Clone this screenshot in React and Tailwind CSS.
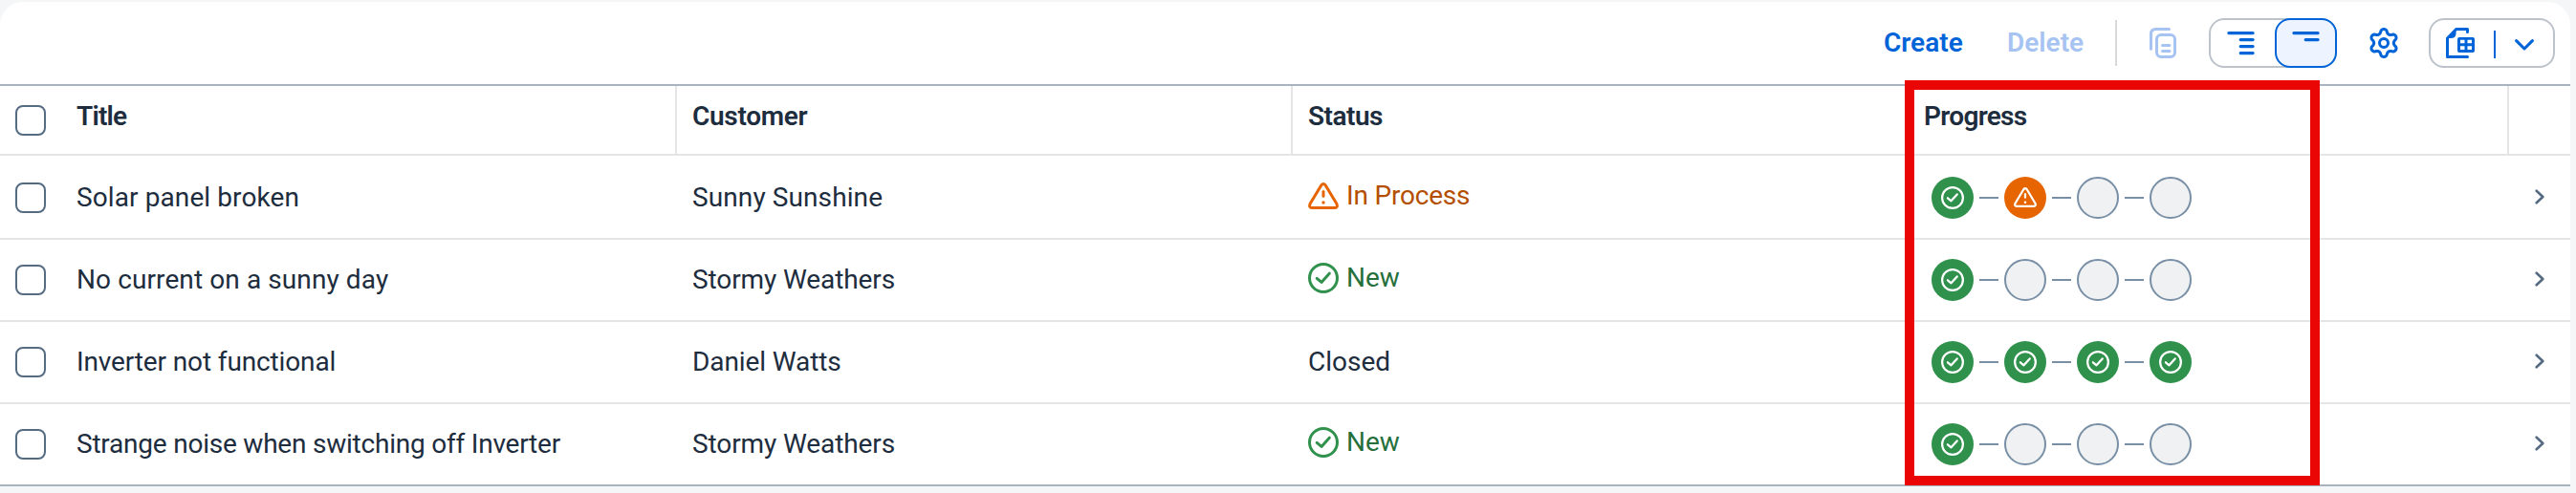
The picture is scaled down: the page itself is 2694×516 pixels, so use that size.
import React from "react";

const rows = [
  { title: "Solar panel broken", titleCls: "tracking-[0.1px]", customer: "Sunny Sunshine", customerCls: "tracking-[0.1px]", status: "In Process", kind: "warn", steps: ["ok", "warn", "", ""] },
  { title: "No current on a sunny day", titleCls: "tracking-[0.1px]", customer: "Stormy Weathers", customerCls: "tracking-[-0.1px]", status: "New", kind: "ok", steps: ["ok", "", "", ""] },
  { title: "Inverter not functional", titleCls: "tracking-[-0.13px]", customer: "Daniel Watts", customerCls: "tracking-[-0.1px]", status: "Closed", kind: "", steps: ["ok", "ok", "ok", "ok"] },
  { title: "Strange noise when switching off Inverter", titleCls: "tracking-[-0.22px]", customer: "Stormy Weathers", customerCls: "tracking-[-0.1px]", status: "New", kind: "ok", steps: ["ok", "", "", ""] },
];

const GRID = "grid grid-cols-[64px_644px_644px_644px_628px_64px]";

const gearPath = (() => {
  const points = [];
  for (let a = 0; a < 360; a += 3) {
    const t = (a * Math.PI) / 180;
    const c = -Math.cos(6 * t);
    const r = 12.4 + 2.1 * Math.sign(c) * Math.pow(Math.abs(c), 0.65);
    points.push(`${(15 + r * Math.cos(t)).toFixed(2)} ${(16 + r * Math.sin(t)).toFixed(2)}`);
  }
  return `M${points.join("L")}Z`;
})();

function CheckCircle({ className }) {
  return (
    <svg viewBox="0 0 32 32" className={className} fill="none" stroke="currentColor" strokeWidth="3" strokeLinecap="round" strokeLinejoin="round">
      <circle cx="16" cy="16" r="14.5" />
      <path d="M9.2 16.4 14 20.4 22.3 11.2" />
    </svg>
  );
}

function Alert({ className }) {
  return (
    <svg viewBox="0 0 32 28" className={className} fill="none" stroke="currentColor" strokeWidth="3" strokeLinecap="round" strokeLinejoin="round">
      <path d="M13.9 2.7Q16 .3 18.1 2.7L29.9 22.3Q31.4 26.3 28 26.5H4Q.6 26.3 2.1 22.3Z" />
      <path d="M16 9.5v4.8" />
      <circle cx="16" cy="21" r="1.7" fill="currentColor" stroke="none" />
    </svg>
  );
}

function Checkbox() {
  return <span className="ml-4 block size-8 rounded-lg border-2 border-[#556b82] bg-white" />;
}

function Step({ kind }) {
  if (kind === "ok")
    return (
      <span className="flex size-11 items-center justify-center rounded-full bg-[#30914c] pb-[1px] text-white">
        <CheckCircle className="size-6" />
      </span>
    );
  if (kind === "warn")
    return (
      <span className="flex size-11 items-center justify-center rounded-full bg-[#e76500] pb-[1px] text-white">
        <Alert className="h-[21px] w-6" />
      </span>
    );
  return <span className="block size-11 rounded-full border-2 border-[#788fa6] bg-[#eff1f2]" />;
}

function Status({ kind, children }) {
  if (kind === "warn")
    return (
      <span className="mb-1 flex items-center gap-2 tracking-[-0.2px] text-[#b44f00]">
        <Alert className="h-7 w-8 text-[#e76500]" />
        {children}
      </span>
    );
  if (kind === "ok")
    return (
      <span className="mb-1 flex items-center gap-2 text-[#256f3a]">
        <CheckCircle className="size-8 text-[#30914c]" />
        {children}
      </span>
    );
  return <span>{children}</span>;
}

function Toolbar() {
  return (
    <div className="flex h-[88px] items-center border-b-2 border-[#a8b3bf] pl-[1970px] font-semibold text-[#0064d9]">
      <span className="w-[129px] shrink-0">Create</span>
      <span className="w-[113px] shrink-0 text-[#a6c3f2]">Delete</span>
      <span className="h-12 w-0.5 shrink-0 bg-[#d9d9d9]" />
      <svg viewBox="0 0 28 32" className="ml-[34px] h-8 w-7 shrink-0 text-[#a6c3f2]" fill="none" stroke="currentColor" strokeWidth="3" strokeLinecap="round">
        <path d="M1.5 22.2V6.5Q1.5 1.5 6.5 1.5H20.5" />
        <rect x="7.5" y="7.5" width="19" height="23" rx="4.5" />
        <path d="M13.5 18.5h7.5M13.5 24.5h7.5" />
      </svg>
      <div className="ml-[34px] flex h-[52px] w-[134px] shrink-0 rounded-2xl bg-[#bcc3ca] p-0.5">
        <div className="flex h-full w-full rounded-[14px] bg-white">
          <span className="flex w-[67px] shrink-0 pt-3 pl-[17px]">
            <svg viewBox="0 0 29 25" className="h-[25px] w-[29px]" fill="none" stroke="currentColor" strokeWidth="3.2" strokeLinecap="round">
              <path d="M1.9 1.6h25.2M14.2 8.6h12.9M14.2 15.6h12.9M14.2 22.6h12.9" />
            </svg>
          </span>
          <span className="-my-0.5 -mr-0.5 flex h-[52px] w-[65px] shrink-0 justify-center rounded-2xl border-2 border-[#0064d9] bg-[#edf4ff] pt-3">
            <svg viewBox="0 0 29 25" className="h-[25px] w-[29px]" fill="none" stroke="currentColor" strokeWidth="3.2" strokeLinecap="round">
              <path d="M1.9 1.6h25.2M14.2 8.6h12.9" />
            </svg>
          </span>
        </div>
      </div>
      <svg viewBox="0 0 30 32" className="ml-[34px] h-8 w-[30px] shrink-0" fill="none" stroke="currentColor" strokeWidth="3" strokeLinejoin="round">
        <path d={gearPath} />
        <circle cx="15" cy="16" r="4.5" />
      </svg>
      <div className="ml-8 flex h-[52px] w-[132px] shrink-0 items-center rounded-2xl border-2 border-[#bcc3ca] pl-4">
        <svg viewBox="0 0 30 32" className="h-8 w-[30px] shrink-0" fill="none" stroke="currentColor" strokeWidth="3" strokeLinecap="round">
          <path d="M22.5 30.5H1.5V11L10.7 1.5H22.5V4.5" strokeLinejoin="round" />
          <path d="M1.5 11 10.5 2V6.5Q10 11 5 11Z" fill="currentColor" stroke="none" />
          <path fillRule="evenodd" stroke="none" fill="currentColor" d="M14 10H28Q30 10 30 12V24Q30 26 28 26H14Q12 26 12 24V12Q12 10 14 10ZM15 12.7V16.2H19.5V12.7ZM22.5 12.7V16.2H27V12.7ZM15 19.3V23H19.5V19.3ZM22.5 19.3V23H27V19.3Z" />
        </svg>
        <span className="mt-0.5 ml-5 h-[29px] w-0.5 shrink-0 bg-[#0064d9]" />
        <svg viewBox="0 0 20 12" className="mt-1 ml-5 h-3 w-5 shrink-0" fill="none" stroke="currentColor" strokeWidth="3" strokeLinecap="round" strokeLinejoin="round">
          <path d="M1.6 1.6 10 10l8.400-8.400" />
        </svg>
      </div>
    </div>
  );
}

export default function App() {
  return (
    <div className="relative h-[516px] w-[2694px] overflow-hidden bg-[#f5f6f7] pt-0.5 font-['Roboto','Liberation_Sans',sans-serif] text-[28px] leading-8 whitespace-nowrap text-[#1d2d3e]">
      <div className="w-[2688px] overflow-hidden rounded-t-3xl bg-white">
        <Toolbar />
        <div className={`${GRID} h-[73px] border-b-2 border-[#e5e5e5] font-semibold`}>
          <span className="flex items-center"><Checkbox /></span>
          <span className="border-r-2 border-[#e5e5e5] pt-4 pl-4 tracking-[-0.8px]">Title</span>
          <span className="border-r-2 border-[#e5e5e5] pt-4 pl-4 tracking-[-0.3px]">Customer</span>
          <span className="border-r-2 border-[#e5e5e5] pt-4 pl-4 tracking-[-0.5px]">Status</span>
          <span className="border-r-2 border-[#e5e5e5] pt-4 pl-4 tracking-[-0.7px]">Progress</span>
          <span />
        </div>
        {rows.map((row, i) => (
          <div
            key={i}
            className={`${GRID} items-center border-b-2 ${i === 0 ? "h-[88px] pt-0.5" : "h-[86px]"} ${i === 3 ? "border-[#a8b3bf]" : "border-[#e5e5e5]"}`}
          >
            <Checkbox />
            <span className={`pl-4 ${row.titleCls}`}>{row.title}</span>
            <span className={`pl-4 ${row.customerCls}`}>{row.customer}</span>
            <span className="pl-4"><Status kind={row.kind}>{row.status}</Status></span>
            <span className="flex items-center gap-1.5 pl-6">
              {row.steps.map((s, j) => (
                <React.Fragment key={j}>
                  {j > 0 && <span className="h-0.5 w-5 bg-[#788fa6]" />}
                  <Step kind={s} />
                </React.Fragment>
              ))}
            </span>
            <svg viewBox="0 0 10 16" className="mb-[3px] ml-[27px] h-4 w-2.5" fill="none" stroke="#556b82" strokeWidth="2.6" strokeLinecap="round" strokeLinejoin="round">
              <path d="M1.700 1.700 8.300 8 1.700 14.300" />
            </svg>
          </div>
        ))}
      </div>
      <div className="absolute top-[84px] left-[1992px] h-[424px] w-[434px] border-[10px] border-[#eb0606]" />
    </div>
  );
}
